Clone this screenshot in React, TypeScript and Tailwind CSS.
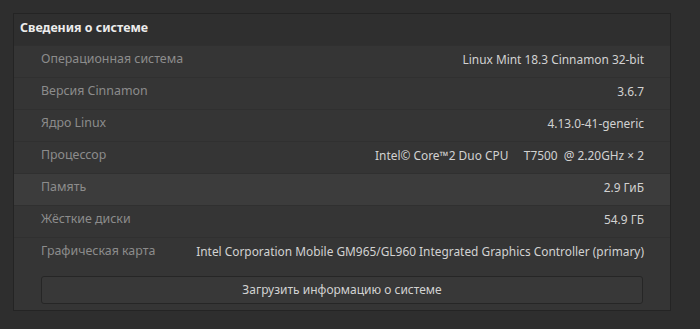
const rows = [
	{ label: "Операционная система", value: "Linux Mint 18.3 Cinnamon 32-bit" },
	{ label: "Версия Cinnamon", value: "3.6.7" },
	{ label: "Ядро Linux", value: "4.13.0-41-generic" },
	{ label: "Процессор", value: "Intel© Core™2 Duo CPU     T7500  @ 2.20GHz × 2" },
	{ label: "Память", value: "2.9 ГиБ", active: true },
	{ label: "Жёсткие диски", value: "54.9 ГБ" },
	{ label: "Графическая карта", value: "Intel Corporation Mobile GM965/GL960 Integrated Graphics Controller (primary)" },
];

export default function App() {
	return (
		<div className="w-[700px] h-[329px] bg-[#2e2e2e] pt-[13px] pl-[13px] font-['Noto_Sans',sans-serif]">
			<div className="w-[658px] border border-[#242424] bg-[#353535]">
				<div className="h-[31px] flex items-center px-[6px] pb-[2px] bg-[#2f2f2f] font-bold text-[12.4px] text-[#ececec]">
					Сведения о системе
				</div>
				{rows.map((r) => (
					<div
						key={r.label}
						className={`h-[32px] flex items-center justify-between gap-4 pl-[27px] pr-[26px] pb-[4px] border-t border-[#303030] ${r.active ? "bg-[#3c3c3c]" : ""}`}
					>
						<span className="text-[#8c8c8c] text-[12.4px] whitespace-nowrap">{r.label}</span>
						<span className="text-[#d2d2d2] text-[11.9px] whitespace-pre">{r.value}</span>
					</div>
				))}
				<div className="px-[27px] pt-[7px] pb-[6px]">
					<button className="w-full h-[28px] rounded-[3px] border border-[#262626] bg-[#383838] text-[#d2d2d2] text-[12px]">
						Загрузить информацию о системе
					</button>
				</div>
			</div>
		</div>
	);
}
